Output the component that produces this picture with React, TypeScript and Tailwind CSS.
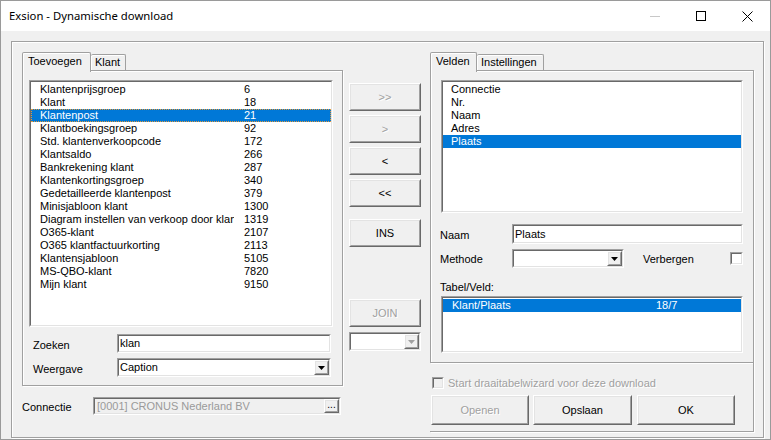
import React from "react";

type BoxProps = { className?: string; inner?: string; children?: React.ReactNode };

const Sunken = ({ className = "", inner = "bg-white", children }: BoxProps) => (
  <div className={`border border-t-[#a0a0a0] border-l-[#a0a0a0] border-r-white border-b-white ${className}`}>
    <div className={`h-full w-full border border-t-[#696969] border-l-[#696969] border-r-[#e3e3e3] border-b-[#e3e3e3] overflow-hidden ${inner}`}>
      {children}
    </div>
  </div>
);

const Raised = ({ className = "", inner = "", children }: BoxProps) => (
  <div className={`border border-t-white border-l-white border-r-[#696969] border-b-[#696969] ${className}`}>
    <div className={`h-full w-full border border-t-[#e3e3e3] border-l-[#e3e3e3] border-r-[#a0a0a0] border-b-[#a0a0a0] bg-[#f0f0f0] flex items-center justify-center ${inner}`}>
      {children}
    </div>
  </div>
);

const Arrow = ({ disabled = false }: { disabled?: boolean }) => (
  <svg width="7" height="4" viewBox="0 0 7 4">
    <path d="M0 0h7L3.5 4z" fill={disabled ? "#a0a0a0" : "#000"} />
  </svg>
);

const DropBtn = ({ disabled = false }: { disabled?: boolean }) => (
  <Raised className="w-[15px] h-full shrink-0">
    <Arrow disabled={disabled} />
  </Raised>
);

const leftItems: [string, string][] = [
  ["Klantenprijsgroep", "6"],
  ["Klant", "18"],
  ["Klantenpost", "21"],
  ["Klantboekingsgroep", "92"],
  ["Std. klantenverkoopcode", "172"],
  ["Klantsaldo", "266"],
  ["Bankrekening klant", "287"],
  ["Klantenkortingsgroep", "340"],
  ["Gedetailleerde klantenpost", "379"],
  ["Minisjabloon klant", "1300"],
  ["Diagram instellen van verkoop door klant", "1319"],
  ["O365-klant", "2107"],
  ["O365 klantfactuurkorting", "2113"],
  ["Klantensjabloon", "5105"],
  ["MS-QBO-klant", "7820"],
  ["Mijn klant", "9150"],
];

const fields = ["Connectie", "Nr.", "Naam", "Adres", "Plaats"];

const etched = "border border-[#a0a0a0] shadow-[inset_1px_1px_0_#fff,1px_1px_0_#fff]";
const disabledText = "text-[#a0a0a0] [text-shadow:1px_1px_0_#fff]";

const ActiveTab = ({ label, w }: { label: string; w: string }) => (
  <div className={`relative z-10 -mb-[2px] h-[20px] ${w} border-t border-l border-r border-[#a0a0a0] shadow-[inset_1px_1px_0_#fff] bg-[#f0f0f0] pl-[5px] pt-[2px] rounded-t-[2px]`}>
    {label}
  </div>
);

const Tab = ({ label, w }: { label: string; w: string }) => (
  <div className={`h-[16px] ${w} border-t border-r border-[#a0a0a0] shadow-[inset_1px_1px_0_#fff] bg-[#f0f0f0] pl-[4px] pt-[1px] rounded-t-[2px]`}>
    {label}
  </div>
);

export default function App() {
  return (
    <div className="w-[771px] h-[440px] bg-[#f0f0f0] border border-[#9a9a9a] flex flex-col overflow-hidden font-['Liberation_Sans',Arial,sans-serif] text-[11px] leading-[13px] text-black">
      {/* Title bar */}
      <div className="h-[30px] shrink-0 bg-white flex items-center">
        <div className="pl-[8px] font-['Noto_Sans',sans-serif] text-[11.3px] leading-[16px] text-black">
          Exsion - Dynamische download
        </div>
        <div className="ml-auto flex h-full">
          <div className="w-[46px] h-full flex items-center justify-center">
            <div className="w-[10px] h-px bg-[#c8c8c8]" />
          </div>
          <div className="w-[46px] h-full flex items-center justify-center">
            <div className="w-[10px] h-[10px] border border-black" />
          </div>
          <div className="w-[46px] h-full flex items-center justify-center">
            <svg width="11" height="11" viewBox="0 0 11 11">
              <path d="M0.5 0.5L10.5 10.5M10.5 0.5L0.5 10.5" stroke="#000" strokeWidth="1" />
            </svg>
          </div>
        </div>
      </div>

      {/* Body */}
      <div className="flex-1 pl-[10px] pt-[10px]">
        <div className={`w-[753px] h-[397px] ${etched} flex pl-[10px] pt-[10px]`}>
          {/* Left column */}
          <div className="w-[321px] flex flex-col">
            <div className="h-[18px] flex items-end">
              <ActiveTab label="Toevoegen" w="w-[69px]" />
              <Tab label="Klant" w="w-[35px]" />
            </div>
            <div className={`h-[316px] ${etched} pl-[6px] pt-[9px] flex flex-col`}>
              <Sunken className="w-[304px] h-[247px]">
                <div className="pt-px">
                  {leftItems.map(([name, num], i) => (
                    <div
                      key={name}
                      className={`h-[13px] flex pl-[9px] whitespace-nowrap ${
                        i === 2 ? "bg-[#0078d7] text-white outline-1 outline-dotted outline-[#e39a3b] -outline-offset-1" : ""
                      }`}
                    >
                      <span className="w-[194px] overflow-hidden">{name}</span>
                      <span className="ml-[10px]">{num}</span>
                    </div>
                  ))}
                </div>
              </Sunken>
              <div className="flex items-center mt-[7px] pl-[4px]">
                <div className="w-[84px] pt-[3px]">Zoeken</div>
                <Sunken className="w-[214px] h-[19px]">
                  <div className="pl-px leading-[15px]">klan</div>
                </Sunken>
              </div>
              <div className="flex items-center mt-[5px] pl-[4px]">
                <div className="w-[84px] pt-[3px]">Weergave</div>
                <Sunken className="w-[214px] h-[19px]" inner="bg-white flex">
                  <div className="flex-1 pl-px leading-[15px]">Caption</div>
                  <DropBtn />
                </Sunken>
              </div>
            </div>
            <div className="flex items-center mt-[11px]">
              <div className="w-[71px] pt-[2px]">Connectie</div>
              <Sunken className="w-[248px] h-[18px]" inner="bg-[#f0f0f0] flex">
                <div className="flex-1 pl-[2px] leading-[14px] text-[#9a9a9a]">[0001] CRONUS Nederland BV</div>
                <Raised className="w-[15px] h-full shrink-0">
                  <span className="text-[10px] leading-[8px] -mt-[2px]">...</span>
                </Raised>
              </Sunken>
            </div>
          </div>

          {/* Middle column */}
          <div className="ml-[6px] w-[72px] pt-[31px] flex flex-col">
            <Raised className="h-[28px]"><span className={disabledText}>&gt;&gt;</span></Raised>
            <Raised className="h-[28px] mt-[4px]"><span className={disabledText}>&gt;</span></Raised>
            <Raised className="h-[28px] mt-[4px]">&lt;</Raised>
            <Raised className="h-[28px] mt-[4px]">&lt;&lt;</Raised>
            <Raised className="h-[28px] mt-[12px]">INS</Raised>
            <Raised className="h-[28px] mt-[52px]"><span className={disabledText}>JOIN</span></Raised>
            <Sunken className="h-[19px] mt-[5px]" inner="bg-white flex justify-end">
              <DropBtn disabled />
            </Sunken>
          </div>

          {/* Right column */}
          <div className="ml-[9px] w-[324px] flex flex-col">
            <div className="h-[18px] flex items-end">
              <ActiveTab label="Velden" w="w-[47px]" />
              <Tab label="Instellingen" w="w-[67px]" />
            </div>
            <div className={`h-[293px] ${etched} pl-[10px] pt-[9px] flex flex-col`}>
              <Sunken className="w-[302px] h-[133px]">
                <div className="pt-px">
                  {fields.map((f, i) => (
                    <div
                      key={f}
                      className={`h-[13px] pl-[8px] ${i === 4 ? "bg-[#0078d7] text-white" : ""}`}
                    >
                      {f}
                    </div>
                  ))}
                </div>
              </Sunken>
              <div className="flex items-center mt-[11px] -ml-px">
                <div className="w-[72px] pt-[2px]">Naam</div>
                <Sunken className="w-[231px] h-[20px]">
                  <div className="pl-px leading-[16px]">Plaats</div>
                </Sunken>
              </div>
              <div className="flex items-center mt-[5px] -ml-px w-[303px]">
                <div className="w-[72px] pt-[2px]">Methode</div>
                <Sunken className="w-[112px] h-[19px]" inner="bg-white flex justify-end">
                  <DropBtn />
                </Sunken>
                <div className="ml-[19px] pt-[2px]">Verbergen</div>
                <Sunken className="ml-auto w-[13px] h-[13px]" />
              </div>
              <div className="mt-[13px] -ml-px h-[13px]">Tabel/Veld:</div>
              <Sunken className="w-[302px] h-[57px] mt-[2px]">
                <div className="pt-px">
                  <div className="h-[13px] flex pl-[9px] bg-[#0078d7] text-white whitespace-nowrap">
                    <span className="w-[194px]">Klant/Plaats</span>
                    <span className="ml-[10px]">18/7</span>
                  </div>
                </div>
              </Sunken>
            </div>
            <div className="h-[69px] border-r border-b border-[#a0a0a0] shadow-[1px_1px_0_#fff] pt-[14px] pl-[2px] flex flex-col">
              <div className="flex items-center h-[12px]">
                <Sunken className="w-[12px] h-[12px]" inner="bg-[#f0f0f0]" />
                <span className={`ml-[4px] ${disabledText}`}>Start draaitabelwizard voor deze download</span>
              </div>
              <div className="flex mt-[6px] -ml-px">
                <Raised className="w-[98px] h-[30px]"><span className={disabledText}>Openen</span></Raised>
                <Raised className="w-[99px] h-[30px] ml-[4px]">Opslaan</Raised>
                <Raised className="w-[98px] h-[30px] ml-[5px]">OK</Raised>
              </div>
            </div>
          </div>
        </div>
      </div>
    </div>
  );
}
